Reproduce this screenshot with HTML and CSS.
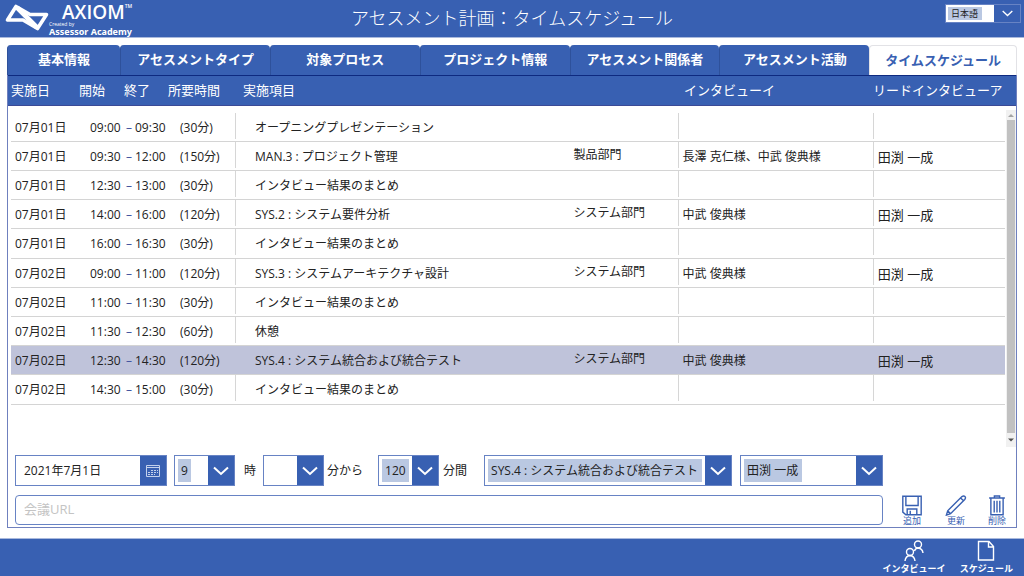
FILE: index.html
```html
<!DOCTYPE html>
<html lang="ja">
<head>
<meta charset="utf-8">
<title>アセスメント計画：タイムスケジュール</title>
<link rel="stylesheet" href="styles.css">
</head>
<body>
<header class="topbar">
  <div class="logo">
    <svg class="logo-mark" viewBox="0 0 46 30" width="46" height="30" aria-hidden="true">
      <path stroke="#fff" stroke-width="3.6" stroke-linejoin="round" d="M12 4.500 3.500 18H19L33.500 26.500 42.500 12.500H26Z"/>
      <path stroke="#fff" stroke-width="4.600" d="M13 5.500 33 25.500"/>
    </svg>
    <div class="logo-text">
      <span class="logo-name">AXIOM<span class="logo-tm">TM</span></span>
      <span class="logo-by">Created by</span>
      <span class="logo-org">Assessor Academy</span>
    </div>
  </div>
  <h1 class="title">アセスメント計画：タイムスケジュール</h1>
  <div class="lang combo">
    <select aria-label="言語"><option>日本語</option></select>
    <span class="arrow"><svg viewBox="0 0 16 10" width="11" height="7"><path d="M1 1.500 8 8l7-6.500"/></svg></span>
  </div>
</header>

<main class="main">
  <nav class="tabs">
    <button class="tab tab-first">基本情報</button>
    <button class="tab">アセスメントタイプ</button>
    <button class="tab">対象プロセス</button>
    <button class="tab">プロジェクト情報</button>
    <button class="tab">アセスメント関係者</button>
    <button class="tab">アセスメント活動</button>
    <button class="tab active">タイムスケジュール</button>
  </nav>

  <section class="panel">
    <div class="schedule">
      <table class="table">
        <thead>
          <tr><th>実施日</th><th>開始</th><th>終了</th><th>所要時間</th><th>実施項目</th><th>インタビューイ</th><th>リードインタビューア</th></tr>
        </thead>
        <tbody>
          <tr><td>07月01日</td><td>09:00</td><td><i>–</i>09:30</td><td>(30分)</td><td>オープニングプレゼンテーション</td><td></td><td></td><td></td></tr>
          <tr><td>07月01日</td><td>09:30</td><td><i>–</i>12:00</td><td>(150分)</td><td>MAN.3 : プロジェクト管理</td><td>製品部門</td><td>長澤 克仁様、中武 俊典様</td><td>田渕 一成</td></tr>
          <tr><td>07月01日</td><td>12:30</td><td><i>–</i>13:00</td><td>(30分)</td><td>インタビュー結果のまとめ</td><td></td><td></td><td></td></tr>
          <tr><td>07月01日</td><td>14:00</td><td><i>–</i>16:00</td><td>(120分)</td><td>SYS.2 : システム要件分析</td><td>システム部門</td><td>中武 俊典様</td><td>田渕 一成</td></tr>
          <tr><td>07月01日</td><td>16:00</td><td><i>–</i>16:30</td><td>(30分)</td><td>インタビュー結果のまとめ</td><td></td><td></td><td></td></tr>
          <tr><td>07月02日</td><td>09:00</td><td><i>–</i>11:00</td><td>(120分)</td><td>SYS.3 : システムアーキテクチャ設計</td><td>システム部門</td><td>中武 俊典様</td><td>田渕 一成</td></tr>
          <tr><td>07月02日</td><td>11:00</td><td><i>–</i>11:30</td><td>(30分)</td><td>インタビュー結果のまとめ</td><td></td><td></td><td></td></tr>
          <tr><td>07月02日</td><td>11:30</td><td><i>–</i>12:30</td><td>(60分)</td><td>休憩</td><td></td><td></td><td></td></tr>
          <tr class="selected"><td>07月02日</td><td>12:30</td><td><i>–</i>14:30</td><td>(120分)</td><td>SYS.4 : システム統合および統合テスト</td><td>システム部門</td><td>中武 俊典様</td><td>田渕 一成</td></tr>
          <tr><td>07月02日</td><td>14:30</td><td><i>–</i>15:00</td><td>(30分)</td><td>インタビュー結果のまとめ</td><td></td><td></td><td></td></tr>
        </tbody>
      </table>
      <div class="scrollbar" aria-hidden="true">
        <svg viewBox="0 0 10 10" width="10" height="10"><path fill="#a3a3a3" d="M2 7 5 4l3 3z"/></svg>
        <span class="thumb"></span>
        <svg viewBox="0 0 10 14" width="10" height="14"><path fill="#505050" d="M2 5.500h6L5 8.500z"/></svg>
      </div>
    </div>

    <form class="editor">
      <div class="fields">
        <div class="combo date">
          <input type="text" value="2021年7月1日" aria-label="実施日">
          <button type="button" class="arrow" aria-label="カレンダー">
            <svg class="cal" viewBox="0 0 14 12" width="14" height="12"><path d="M.5.500h13v11H.5zM.5 2.500h13"/><path stroke-dasharray="2 1" d="M5 5.500h7M2 7.500h10M2 9.500h7"/></svg>
          </button>
        </div>
        <div class="combo num">
          <select id="hour"><option>9</option></select>
          <span class="arrow"><svg viewBox="0 0 16 10" width="16" height="10"><path d="M1 1.500 8 8l7-6.500"/></svg></span>
        </div>
        <label class="unit unit-hour" for="hour">時</label>
        <div class="combo num">
          <select id="minute" class="blank"><option></option></select>
          <span class="arrow"><svg viewBox="0 0 16 10" width="16" height="10"><path d="M1 1.500 8 8l7-6.500"/></svg></span>
        </div>
        <label class="unit unit-from" for="minute">分から</label>
        <div class="combo num">
          <select id="length"><option>120</option></select>
          <span class="arrow"><svg viewBox="0 0 16 10" width="16" height="10"><path d="M1 1.500 8 8l7-6.500"/></svg></span>
        </div>
        <label class="unit unit-len" for="length">分間</label>
        <div class="combo item">
          <select aria-label="実施項目"><option>SYS.4 : システム統合および統合テスト</option></select>
          <span class="arrow"><svg viewBox="0 0 16 10" width="16" height="10"><path d="M1 1.500 8 8l7-6.500"/></svg></span>
        </div>
        <div class="combo lead">
          <select aria-label="リードインタビューア"><option>田渕 一成</option></select>
          <span class="arrow"><svg viewBox="0 0 16 10" width="16" height="10"><path d="M1 1.500 8 8l7-6.500"/></svg></span>
        </div>
      </div>
      <input class="url" type="text" placeholder="会議URL" aria-label="会議URL">
      <div class="actions">
        <button type="button" class="action">
          <svg viewBox="0 0 24 24" width="24" height="24"><path d="M1.500 1.500h21v21H5L1.500 19.500zM5 1.500V12h14V1.500M6.500 22.500V16h11v6.500M10 18v4"/></svg>
          <span>追加</span>
        </button>
        <button type="button" class="action">
          <svg viewBox="0 0 24 24" width="24" height="24"><path stroke-width="1.300" d="M1 23l1.500-5L18.800 1.800q2-1.500 3.500 0 1.200 1.500-.3 3.300L5.800 21.300zM2.500 18l3.300 3.300M17.300 3.300l3.300 3.300"/></svg>
          <span>更新</span>
        </button>
        <button type="button" class="action">
          <svg viewBox="0 0 18 24" width="18" height="24"><path d="M0 3.500h18M6 3V1.200h6V3M2 4v18.500h14V4M5.800 6.500v13.500M9 6.500v13.500M12.200 6.500v13.500"/></svg>
          <span>削除</span>
        </button>
      </div>
    </form>
  </section>
</main>

<footer class="bottombar">
  <button class="nav-item">
    <svg viewBox="0 0 20 22" width="20" height="22"><circle cx="14" cy="4.500" r="3.500"/><path d="M10.500 11q.5-2.500 3.500-3 4.500.5 5 5"/><circle cx="6" cy="12" r="3.500"/><path d="M1 21q.5-5 5-5.500 4.500.5 5 5.500"/></svg>
    <span>インタビューイ</span>
  </button>
  <button class="nav-item">
    <svg viewBox="0 0 20 22" width="20" height="22"><path d="M2.500 1.500h10.500l4.500 5v13.500h-15zM12.500 1.500v5.500h5"/></svg>
    <span>スケジュール</span>
  </button>
</footer>
</body>
</html>
```
FILE: styles.css
```css
:root {
  --blue: #3860b2;
  --navy: #0e2a80;
  --edge: #6783c4;
  --mark: #bac8e2;
  --line: #d4d4d4;
}

* {
  box-sizing: border-box;
}

body {
  margin: 0;
  min-height: 100vh;
  display: flex;
  flex-direction: column;
  background: #fff;
  color: #222;
  font: 12px/16px "Open Sans", "Noto Sans CJK JP", sans-serif;
}

button,
input,
select {
  font: inherit;
  color: inherit;
  margin: 0;
  padding: 0;
  border: 0;
  border-radius: 0;
  background: none;
  appearance: none;
  outline: 0;
}

svg {
  display: block;
  fill: none;
}

/* Top bar */
.topbar {
  display: grid;
  grid-template-columns: 1fr auto 1fr;
  height: 38px;
  background: var(--blue);
  border-bottom: 1px solid #a9b9dd;
  color: #fff;
}

.logo {
  display: flex;
  padding: 2px 0 0 4px;
}

.logo-text {
  display: flex;
  flex-direction: column;
  margin-left: -1px;
  white-space: nowrap;
}

.logo-name {
  padding-left: 13px;
  font-size: 19px;
  line-height: 20px;
  font-weight: 600;
}

.logo-tm {
  font-size: 5px;
  line-height: 5px;
  vertical-align: 11px;
}

.logo-by {
  font-size: 5px;
  line-height: 4px;
}

.logo-org {
  font: 700 9px/11px "Noto Sans", sans-serif;
}

.title {
  margin: 0;
  font-size: 18px;
  line-height: 37px;
  font-weight: 300;
}

/* Boxes with an attached square button */
.combo {
  display: flex;
  height: 31px;
  border: 1px solid var(--edge);
  background: #fff;
  color: #222;
}

.combo select {
  margin: 3px;
  padding: 0 3px;
  background: var(--mark);
}

.combo select.blank {
  background: #fff;
}

.arrow {
  display: grid;
  place-items: center;
  width: 26px;
  margin-left: auto;
  background: var(--blue);
  flex: none;
}

button.arrow {
  margin: 0;
}

.arrow path {
  stroke: #fff;
  stroke-width: 2;
}

.arrow .cal path {
  stroke: #c3d1ec;
  stroke-width: 1;
}

.lang {
  justify-self: end;
  width: 76px;
  height: 19px;
  margin: 4px 3px 0 0;
}

.lang select {
  margin: 2px;
  font-size: 9px;
  line-height: 12px;
}

/* Tabs */
.main {
  flex: 1;
  display: flex;
  flex-direction: column;
  padding: 7px 7px 10px;
}

.tabs {
  display: flex;
}

.tab {
  flex: 150 1 0;
  height: 30px;
  padding-bottom: 2px;
  background: var(--blue);
  border-left: 1px solid #2e519b;
  border-radius: 4px 4px 0 0;
  color: #fff;
  font-size: 13px;
  font-weight: 700;
  white-space: nowrap;
}

.tab-first {
  flex-grow: 113;
}

.tab.active {
  flex-grow: 147;
  background: #fff;
  border: 1px solid #e2e2e6;
  border-bottom: 0;
  color: var(--blue);
}

/* Schedule table */
.panel {
  flex: 1;
  display: flex;
  flex-direction: column;
  border: 1px solid #6f80be;
  border-top: 0;
}

.schedule {
  flex: 1;
  display: grid;
  grid-template-columns: 1fr 11px;
  grid-template-rows: 31px 1fr;
}

.table {
  grid-area: 1 / 1 / 3 / 3;
  display: block;
}

.table thead,
.table tbody {
  display: block;
}

.table thead tr {
  display: grid;
  grid-template-columns: 68px 45px 44px 75px 441fr 189fr 143fr;
  height: 31px;
  padding-left: 3px;
  background: var(--blue);
  border-top: 1px solid var(--navy);
  border-bottom: 1px solid #3b4a96;
  color: #fff;
  font-size: 13px;
  line-height: 28px;
  text-align: left;
}

.table th {
  padding: 0;
  font-weight: 400;
  white-space: nowrap;
}

.table tbody {
  padding: 7px 11px 0 3px;
}

.table tbody tr {
  display: grid;
  grid-template-columns: 75px 36px 54px 59px 337fr 105fr 195fr 132fr;
  height: 29px;
  border-bottom: 1px solid var(--line);
  line-height: 30px;
}

.table tbody tr:nth-child(5n) {
  height: 30px;
}

.table td {
  height: 28px;
  padding: 0 0 0 4px;
  white-space: nowrap;
}

.table td i {
  margin-right: 3px;
  color: #4355a0;
  font-style: normal;
}

.table td:nth-child(5),
.table td:nth-child(7),
.table td:nth-child(8) {
  padding-left: 5px;
  background: linear-gradient(#d6d6d6, #d6d6d6) 0 0 / 1px 26px no-repeat;
}

.table td:nth-child(5) {
  padding-left: 20px;
}

.table td:nth-child(6) {
  padding-left: 1px;
  line-height: 25px;
}

.table td:nth-child(8) {
  font-size: 13px;
}

.table .selected {
  background: #bfc3da;
}

.table .selected td {
  background: none;
}

.scrollbar {
  grid-area: 2 / 2;
  display: flex;
  flex-direction: column;
  margin: 4px 0 0 1px;
  background: #f1f1f1;
}

.thumb {
  flex: 1;
  margin: 0 1px;
  background: #c1c1c1;
}

/* Entry form */
.editor {
  display: grid;
  grid-template-columns: 1fr auto;
  grid-template-rows: 31px 30px;
  row-gap: 9px;
  column-gap: 17px;
  padding: 8px 10px 2px 7px;
}

.fields {
  display: flex;
}

.date {
  width: 152px;
  margin-right: 7px;
}

.date input {
  flex: 1;
  min-width: 0;
  padding-left: 8px;
}

.num {
  width: 61px;
}

.unit {
  line-height: 31px;
}

.unit-hour {
  margin: 0 7px 0 9px;
}

.unit-from {
  margin: 0 15px 0 3px;
}

.unit-len {
  margin: 0 17px 0 4px;
}

.item {
  flex: 247 1 0;
  margin-right: 8px;
}

.lead {
  flex: 144 1 0;
}

.url {
  grid-row: 2;
  border: 1px solid var(--edge);
  border-radius: 4px;
  padding: 0 8px 2px;
  font-size: 13px;
}

.url::placeholder {
  color: #c4c4c4;
  opacity: 1;
}

.actions {
  grid-area: 2 / 2;
  display: flex;
  gap: 20px;
}

.action {
  display: flex;
  flex-direction: column;
  align-items: center;
  color: var(--blue);
  font-size: 9px;
  line-height: 9px;
}

.action path {
  stroke: var(--blue);
  stroke-width: 1.6;
}

/* Bottom bar */
.bottombar {
  display: flex;
  justify-content: flex-end;
  gap: 14px;
  height: 38px;
  padding: 1px 11px 0 0;
  background: var(--blue);
  border-top: 1px solid #a9b9dd;
}

.nav-item {
  display: flex;
  flex-direction: column;
  align-items: center;
  color: #fff;
  font-size: 9px;
  line-height: 13px;
  font-weight: 700;
}

.nav-item path,
.nav-item circle {
  stroke: #fff;
  stroke-width: 1.4;
}
```
